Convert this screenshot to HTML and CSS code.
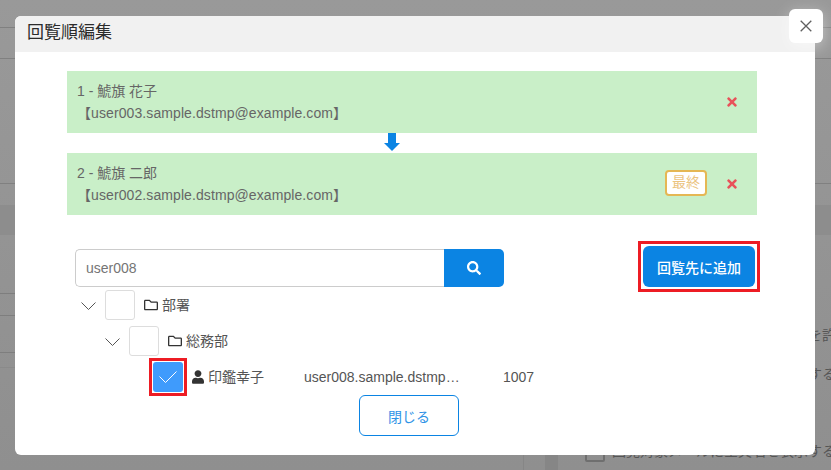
FILE: index.html
```html
<!DOCTYPE html>
<html lang="ja">
<head>
<meta charset="utf-8">
<title>回覧順編集</title>
<link rel="stylesheet" href="styles.css">
</head>
<body>
<div class="page">
  <div class="band band-27"></div>
  <div class="band band-31"></div>
  <div class="band band-125"></div>
  <div class="band band-22"></div>
  <div class="band band-dark"></div>
  <div class="lower">
    <div class="lower-left">
      <div class="lrow lrow-58"></div>
      <div class="lrow lrow-22"></div>
      <div class="lrow lrow-37"></div>
      <div class="lrow lrow-15"></div>
    </div>
    <div class="lower-gap"></div>
    <div class="lower-bar"></div>
    <div class="lower-right">
      <div class="opt">回覧者が回覧順の変更と差し戻しを許可する</div>
      <div class="opt">回覧者に回覧順変更や追加を許可する</div>
      <div class="opt opt-c"><span class="opt-box"></span>回覧対象メールに全員名を表示する</div>
    </div>
  </div>
</div>

<div class="modal">
  <button class="modal-close" type="button" aria-label="閉じる">
    <svg width="12" height="12" viewBox="0 0 12 12"><path d="M.7.7l10.6 10.6M11.3.7L.7 11.3" fill="none" stroke="#5f5f5f" stroke-width="1.3"/></svg>
  </button>
  <div class="modal-head">回覧順編集</div>
  <div class="modal-body">
    <div class="item">
      <div class="item-text">
        <div>1 - 鯱旗 花子</div>
        <div class="item-mail">【user003.sample.dstmp@example.com】</div>
      </div>
      <svg class="item-x" viewBox="0 0 352 512"><path d="M242.72 256l100.07-100.07c12.28-12.28 12.28-32.19 0-44.48l-22.24-22.24c-12.28-12.28-32.19-12.28-44.48 0L176 189.28 75.93 89.21c-12.28-12.28-32.19-12.28-44.48 0L9.21 111.45c-12.28 12.28-12.28 32.19 0 44.48L109.28 256 9.21 356.07c-12.28 12.28-12.28 32.19 0 44.48l22.24 22.24c12.28 12.28 32.2 12.28 44.48 0L176 322.72l100.07 100.07c12.28 12.28 32.2 12.28 44.48 0l22.24-22.24c12.28-12.28 12.28-32.19 0-44.48L242.72 256z"/></svg>
    </div>
    <div class="arrow-row">
      <svg width="16" height="18" viewBox="0 0 16 18"><path d="M4 0h8v10h4l-8 8-8-8h4z" fill="#0b84e3"/></svg>
    </div>
    <div class="item">
      <div class="item-text">
        <div>2 - 鯱旗 二郎</div>
        <div class="item-mail">【user002.sample.dstmp@example.com】</div>
      </div>
      <span class="badge">最終</span>
      <svg class="item-x" viewBox="0 0 352 512"><path d="M242.72 256l100.07-100.07c12.28-12.28 12.28-32.19 0-44.48l-22.24-22.24c-12.28-12.28-32.19-12.28-44.48 0L176 189.28 75.93 89.21c-12.28-12.28-32.19-12.28-44.48 0L9.21 111.45c-12.28 12.28-12.28 32.19 0 44.48L109.28 256 9.21 356.07c-12.28 12.28-12.28 32.19 0 44.48l22.24 22.24c12.28 12.28 32.2 12.28 44.48 0L176 322.72l100.07 100.07c12.28 12.28 32.2 12.28 44.48 0l22.24-22.24c12.28-12.28 12.28-32.19 0-44.48L242.72 256z"/></svg>
    </div>

    <div class="search-row">
      <div class="search">
        <input class="search-input" type="text" value="user008">
        <button class="search-btn" type="button" aria-label="検索">
          <svg width="14" height="14" viewBox="0 0 512 512"><path fill="#fff" d="M505 442.7L405.3 343c-4.5-4.5-10.6-7-17-7H372c27.6-35.3 44-79.7 44-128C416 93.1 322.9 0 208 0S0 93.1 0 208s93.1 208 208 208c48.3 0 92.7-16.4 128-44v16.3c0 6.4 2.5 12.5 7 17l99.7 99.7c9.4 9.4 24.6 9.4 33.9 0l28.3-28.3c9.4-9.4 9.4-24.6.1-34zM208 336c-70.7 0-128-57.2-128-128 0-70.7 57.2-128 128-128 70.7 0 128 57.2 128 128 0 70.7-57.2 128-128 128z"/></svg>
        </button>
      </div>
      <button class="add-btn" type="button">回覧先に追加</button>
    </div>

    <div class="tree">
      <div class="tree-row">
        <svg class="chev" width="15" height="8" viewBox="0 0 15 8"><path d="M.5.5l7 7 7-7" fill="none" stroke="#555" stroke-width="1"/></svg>
        <span class="check"></span>
        <svg class="folder" width="14" height="14" viewBox="0 0 512 512"><path fill="#333" d="M464 128H272l-54.63-54.63c-6-6-14.14-9.37-22.63-9.37H48C21.49 64 0 85.49 0 112v288c0 26.51 21.49 48 48 48h416c26.51 0 48-21.49 48-48V176c0-26.51-21.49-48-48-48zm0 272H48V112h140.12l54.63 54.63c6 6 14.14 9.37 22.63 9.37H464v224z"/></svg>
        <span class="label">部署</span>
      </div>
      <div class="tree-row indent-1">
        <svg class="chev" width="15" height="8" viewBox="0 0 15 8"><path d="M.5.5l7 7 7-7" fill="none" stroke="#555" stroke-width="1"/></svg>
        <span class="check"></span>
        <svg class="folder" width="14" height="14" viewBox="0 0 512 512"><path fill="#333" d="M464 128H272l-54.63-54.63c-6-6-14.14-9.37-22.63-9.37H48C21.49 64 0 85.49 0 112v288c0 26.51 21.49 48 48 48h416c26.51 0 48-21.49 48-48V176c0-26.51-21.49-48-48-48zm0 272H48V112h140.12l54.63 54.63c6 6 14.14 9.37 22.63 9.37H464v224z"/></svg>
        <span class="label">総務部</span>
      </div>
      <div class="tree-row indent-2">
        <span class="check checked">
          <svg width="18" height="12" viewBox="0 0 18 12"><path d="M.5 5.5l6 6 11-11" fill="none" stroke="#fff" stroke-width="1"/></svg>
        </span>
        <svg class="person" width="12" height="14" viewBox="0 0 448 512"><path fill="#333" d="M224 256c70.7 0 128-57.3 128-128S294.7 0 224 0 96 57.3 96 128s57.3 128 128 128zm89.6 32h-16.7c-22.2 10.2-46.9 16-72.9 16s-50.6-5.8-72.9-16h-16.7C60.2 288 0 348.2 0 422.4V464c0 26.5 21.5 48 48 48h352c26.5 0 48-21.5 48-48v-41.6c0-74.2-60.2-134.4-134.4-134.4z"/></svg>
        <span class="label name">印鑑幸子</span>
        <span class="email">user008.sample.dstmp@example.com</span>
        <span class="ext">1007</span>
      </div>
    </div>

    <div class="footer">
      <button class="close-btn" type="button">閉じる</button>
    </div>
  </div>
</div>
</body>
</html>
```

FILE: styles.css
```css
* {
  box-sizing: border-box;
}

html,
body {
  margin: 0;
  height: 100%;
  overflow: hidden;
}

body {
  font-family: "Liberation Sans", "Noto Sans CJK JP", sans-serif;
  font-size: 14px;
  color: #666;
  position: relative;
}

/* dimmed page behind the dialog */
.page {
  height: 470px;
  overflow: hidden;
  display: flex;
  flex-direction: column;
  background: linear-gradient(#999, #8f8f8f);
}

.band {
  border-bottom: 1px solid #808080;
  flex: none;
}

.band-27 { height: 28px; }
.band-31 { height: 31px; }
.band-125 { height: 125px; }
.band-22 { height: 21px; border-bottom: 0; }

.band-dark {
  height: 30px;
  border-bottom: 0;
  background: #8d8d8d;
}

.lower {
  flex: 1;
  display: flex;
}

.lower-left {
  width: 524px;
  border-right: 1px solid #868686;
  flex: none;
}

.lrow {
  border-bottom: 1px solid #7e7e7e;
}

.lrow-58 { height: 59px; }
.lrow-22 { height: 22px; }
.lrow-37 { height: 37px; }
.lrow-15 { height: 15px; border-bottom-color: #8a8a8a; }

.lower-gap {
  width: 21px;
  flex: none;
}

.lower-bar {
  width: 13px;
  flex: none;
  background: #868686;
}

.lower-right {
  flex: 1;
  min-width: 0;
  padding: 89px 0 0 40px;
  white-space: nowrap;
  color: #555;
  overflow: hidden;
}

.opt {
  height: 39px;
  line-height: 22px;
}

.opt-c {
  display: flex;
  align-items: flex-start;
  margin: 38px 0 0 -13px;
  height: 22px;
}

.opt-box {
  width: 20px;
  height: 20px;
  margin: 2px 7px 0 0;
  border: 2px solid #6f6f6f;
  border-radius: 2px;
  flex: none;
}

/* dialog */
.modal {
  position: absolute;
  left: 15px;
  top: 16px;
  width: 800px;
  height: 439px;
  background: #fff;
  border-radius: 6px;
}

.modal-close {
  position: absolute;
  right: -8px;
  top: -7px;
  width: 34px;
  height: 34px;
  padding: 0;
  border: 0;
  border-radius: 6px;
  background: #fff;
  box-shadow: 0 4px 16px rgba(255, 255, 255, 0.45);
  display: flex;
  align-items: center;
  justify-content: center;
}

.modal-head {
  height: 36px;
  padding-left: 12px;
  background: #f1f1f1;
  border-radius: 6px 6px 0 0;
  font-size: 17px;
  line-height: 34px;
  color: #2b2b2b;
}

.modal-body {
  padding: 19px 58px 0 52px;
}

.item {
  height: 62px;
  padding: 0 20px 0 10px;
  background: #c9efc8;
  display: flex;
  align-items: center;
  line-height: 22px;
}

.item-text {
  flex: 1;
  min-width: 0;
}

.item-mail {
  letter-spacing: 0.09px;
}

.item-x {
  width: 10px;
  height: 14px;
  fill: #e8525a;
  flex: none;
}

.badge {
  width: 42px;
  height: 26px;
  margin: -2px 20px 0 0;
  border: 2px solid #e5b754;
  border-radius: 4px;
  background: #fff;
  color: #ebc47f;
  line-height: 21px;
  text-align: center;
  flex: none;
}

.arrow-row {
  height: 20px;
  padding-right: 40px;
  display: flex;
  justify-content: center;
  align-items: flex-start;
}

.search-row {
  margin: 31px 2px 0 8px;
  display: flex;
  justify-content: space-between;
  align-items: flex-end;
}

.search {
  display: flex;
  width: 429px;
  height: 38px;
}

.search-input {
  flex: 1;
  min-width: 0;
  padding: 0 10px;
  border: 1px solid #ccc;
  border-right: 0;
  border-radius: 5px 0 0 5px;
  font: inherit;
  color: #757575;
  outline: 0;
  background: #fff;
}

.search-btn {
  width: 60px;
  padding: 0;
  border: 0;
  border-radius: 0 5px 5px 0;
  background: #0b84e3;
  display: flex;
  align-items: center;
  justify-content: center;
}

.add-btn {
  position: relative;
  width: 112px;
  height: 41px;
  padding: 0;
  border: 0;
  border-radius: 6px;
  background: #0b84e3;
  color: #fff;
  font: inherit;
  font-weight: 500;
}

/* red annotation frames drawn over the screenshot */
.add-btn::after,
.check.checked::after {
  content: "";
  position: absolute;
  border: 3px solid #ed1c24;
}

.add-btn::after {
  inset: -5px;
}

.tree {
  margin-left: 8px;
}

.tree-row {
  height: 36px;
  display: flex;
  align-items: center;
  white-space: nowrap;
  color: #555;
}

.indent-1 { padding-left: 24px; }
.indent-2 { padding-left: 78px; }

.chev {
  margin: 1px 9px 0 6px;
  flex: none;
}

.check {
  position: relative;
  width: 30px;
  height: 30px;
  border: 1px solid #ddd;
  border-radius: 3px;
  background: #fff;
  flex: none;
  display: flex;
  align-items: center;
  justify-content: center;
}

.check.checked {
  background: #3f9bfc;
  border: 0;
}

.check.checked::after {
  inset: -4px;
}

.folder {
  margin: 0 4px 0 9px;
  flex: none;
}

.person {
  margin: 0 4px 0 9px;
  flex: none;
}

.label {
  margin-bottom: 2px;
}

.name {
  width: 96px;
  flex: none;
}

.email {
  width: 160px;
  overflow: hidden;
  text-overflow: ellipsis;
  flex: none;
}

.ext {
  margin-left: 39px;
}

.footer {
  display: flex;
  justify-content: center;
  padding-right: 6px;
}

.close-btn {
  width: 100px;
  height: 41px;
  padding: 0;
  border: 1px solid #0b84e3;
  border-radius: 6px;
  background: #fff;
  color: #2f93e6;
  font: inherit;
}
```
